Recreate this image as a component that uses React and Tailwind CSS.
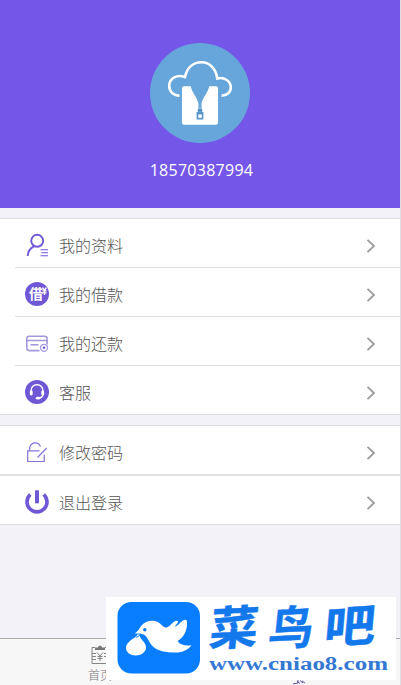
import React from "react";

const purple = "#7057d6";

function UserIcon() {
  return (
    <svg viewBox="0 0 24 24" className="size-6" fill="none" stroke={purple} strokeWidth="1.9">
      <circle cx="12.2" cy="7.8" r="6" />
      <path d="M2.7 23C3 18.3 5.2 15 9 13.3" />
      <path d="M15.5 16.7h7.5M16.5 19.7h6.5M15.5 22.7h7.5" strokeWidth="1.1" />
    </svg>
  );
}

function LoanIcon() {
  return (
    <svg viewBox="0 0 24 24" className="size-6">
      <circle cx="12" cy="12" r="12" fill={purple} />
      <text x="4" y="17" fontSize="14" fontWeight="700" fill="#fff" fontFamily="'Noto Sans CJK SC', sans-serif">借</text>
      <path d="M17.5 5.5l2 2.6 2-2.6M19.5 8v5M17.4 8.8h4.2M17.4 10.8h4.2" fill="none" stroke="#fff" strokeWidth="1.3" />
    </svg>
  );
}

function CardIcon() {
  return (
    <svg viewBox="0 0 24 24" className="size-6" fill="none" stroke="#a598df" strokeWidth="1.6">
      <path d="M14.5 19.6H4.3a2.5 2.5 0 0 1-2.5-2.5V7.5a2.3 2.3 0 0 1 2.3-2.3h15.7a2.3 2.3 0 0 1 2.3 2.3v6" />
      <path d="M1.8 10.4c0-.6.5-.9 1.2-.9h18c.7 0 1.1.3 1.1.9" strokeWidth="1.4" />
      <path d="M5.5 13.8h8" />
      <circle cx="19" cy="16.8" r="3.5" strokeWidth="1.3" />
      <circle cx="19" cy="16.8" r="1.3" fill={purple} stroke="none" />
    </svg>
  );
}

function ServiceIcon() {
  return (
    <svg viewBox="0 0 24 24" className="size-6">
      <circle cx="12" cy="12" r="12" fill={purple} />
      <path d="M6 11.5C5.8 7 8.4 4.7 12 4.7s6.2 2.3 6 6.8M18.2 14c-.6 2.6-2.2 4-4.2 4.3" fill="none" stroke="#fff" strokeWidth="1.4" />
      <rect x="4.8" y="10.4" width="2.9" height="5" rx="1.3" fill="#fff" />
      <rect x="16.3" y="10.4" width="2.9" height="5" rx="1.3" fill="#fff" />
      <ellipse cx="13" cy="18.2" rx="2.2" ry="1.4" fill="#fff" />
    </svg>
  );
}

function PasswordIcon() {
  return (
    <svg viewBox="0 0 24 24" className="size-6" fill="none" stroke="#8471d8" strokeWidth="1.2">
      <path d="M14.5 10.8H2.7v10.7h16.5v-7" />
      <path d="M4.5 10.5C4.2 5.8 6.5 2.9 10 2.9c2.9 0 4.8 1.5 5.5 3.8" />
      <path d="M12.5 17.5L21.7 8" />
    </svg>
  );
}

function PowerIcon() {
  return (
    <svg viewBox="0 0 24 24" className="size-6" fill="none" stroke={purple} strokeWidth="3.6">
      <path d="M5.3 4.5a10 10 0 1 0 13.400 0" />
      <path d="M12 .3v13" strokeWidth="4" />
    </svg>
  );
}

function Chevron() {
  return (
    <svg viewBox="0 0 10 14" className="mt-0.5 mr-6 h-3.5 w-2.5" fill="none" stroke="#9b9b9b" strokeWidth="1.8">
      <path d="M1.5 .8L8 7l-6.500 6.200" />
    </svg>
  );
}

function Row({ icon: Icon, label, className }) {
  return (
    <div className={`flex items-center pt-[3px] ${className}`}>
      <Icon />
      <span className="ml-2.5 flex-1 pt-0.5 text-base leading-6 font-light">{label}</span>
      <Chevron />
    </div>
  );
}

function Avatar() {
  return (
    <svg viewBox="0 0 100 100" className="size-[100px]">
      <circle cx="50" cy="50" r="50" fill="#67a6db" />
      <path d="M29.5 52.7C23 52.5 19 48 19.2 42.5 19.5 35 27 31 35 34 37 25 43 19.3 51.5 19.3S66 26 67.3 35.5C74 33.5 80.5 38 80.8 44c.2 5-3.8 8.7-9.3 8.7" fill="none" stroke="#fff" strokeWidth="2.6" />
      <path d="M34 43.3h6.7c1.5 7 6.8 11 7.8 18v4h3v-4c1-7 6.3-11 7.8-18H66a2 2 0 0 1 2 2v34.5a2 2 0 0 1-2 2H34a2 2 0 0 1-2-2V45.3a2 2 0 0 1 2-2z" fill="#fff" />
      <path d="M48.5 60v5M51.5 60v5" stroke="#a8cbe8" strokeWidth="1" />
      <path d="M47.8 65.5h4.4v3.5h1.2v7.5h-6.8V69h1.2z" fill="#5a96c5" />
      <path d="M48.3 71.5h3.5v3.3h-3.5z" fill="#fff" />
    </svg>
  );
}

function HomeIcon() {
  return (
    <svg viewBox="0 0 18 21" className="h-[21px] w-[18px]" fill="none" stroke="#858585" strokeWidth="1">
      <path d="M4 3.5H1v16h16v-16h-3M1 9.5h4M1 12.5h4M1 15.5h4M13 9.5h4M13 12.5h4" />
      <path d="M4 6V3.5h3C7 1 11 1 11 3.5h3V6z" fill="#777" stroke="none" />
      <path d="M6 8.5l3 3.5 3-3.5M9 12v5M6.5 12.5h5M6.5 14.5h5" />
    </svg>
  );
}

function Banner() {
  return (
    <svg viewBox="0 0 290 83" className="absolute top-[597px] left-[106px] h-[83px] w-[290px] overflow-visible">
      <rect width="290" height="83" fill="#fff" />
      <rect x="11.5" y="5" width="82.5" height="71.5" rx="14" fill="#087eff" />
      <path d="M28.7 36.5C32 34.5 33.5 31 35.5 28.5 38 25.5 42 23.7 46 23.7c4.500 0 7.500 2 10 4.800 2 1.800 3.500 2.300 5 1.700 4-1.500 5-5 8.500-6.300 2-.8 3.500.3 2.300 1.700L68.500 30C73 28.500 75 23.500 79 22.800c2-.3 2 1.500 2 3.200 0 8-3 14-9.500 18 3 4.300 8 5 14 4.300-3 4.500-9 7.300-16 7.300-10 0-18-1.500-23-6.500-3.500-3.500-4.500-8.500-8-11-3-2-6-1.500-9.800-1.600z" fill="#fff" />
      <path d="M31 37.5c1 3-11 6-11 13.500 0 4.500 4.500 7.500 9.800 7.500S40 55 40 50.500c0-6-6.500-8-6.500-13z" fill="#fff" />
      <path d="M30 40.5l4.500-2.500 3 2.500" fill="none" stroke="#087eff" strokeWidth=".9" />
      <circle cx="38.8" cy="32.8" r="1.7" fill="#087eff" />
      <g fill="#1478ed" stroke="#1478ed" strokeWidth=".5" fontFamily="'Noto Sans CJK SC', sans-serif" fontWeight="700" fontSize="46">
        <text transform="translate(102 49) rotate(-3) skewX(-9) scale(1.06 1)">菜</text>
        <text transform="translate(161 49) rotate(-3) skewX(-9) scale(.98 1)">鸟</text>
        <text transform="translate(217 47) rotate(-4) skewX(-9) scale(1.12 .96)">吧</text>
      </g>
      <text x="103" y="73" fontFamily="'Liberation Serif', serif" fontWeight="700" fontSize="18" textLength="179" lengthAdjust="spacingAndGlyphs" fill="#3478d4">www.cniao8.com</text>
    </svg>
  );
}

export default function App() {
  return (
    <div className="relative flex h-[685px] w-[401px] flex-col overflow-hidden border-r border-[#dedee2] bg-[#f3f2f8] font-['Open_Sans','Noto_Sans_CJK_SC',sans-serif] text-[#555]">
      <header className="flex h-[208px] shrink-0 flex-col items-center bg-[#7456e9] pt-[43px]">
        <Avatar />
        <p className="mt-[15px] pl-[3px] text-base leading-6 tracking-[0.27px] text-white">18570387994</p>
      </header>

      <section className="mt-2.5 shrink-0 border-y border-[#dedede] bg-white">
        <div className="ml-[15px] divide-y divide-[#dedede]">
          <Row icon={UserIcon} label="我的资料" className="h-[49px] pl-2.5" />
          <Row icon={LoanIcon} label="我的借款" className="h-[49px] pl-2.5" />
          <Row icon={CardIcon} label="我的还款" className="h-[49px] pl-2.5" />
          <Row icon={ServiceIcon} label="客服" className="h-12 pl-2.5" />
        </div>
      </section>

      <section className="mt-2.5 shrink-0 border-y border-[#dedede] bg-white">
        <Row icon={PasswordIcon} label="修改密码" className="h-[50px] border-b-2 border-[#e2e2e2] pl-[25px]" />
        <Row icon={PowerIcon} label="退出登录" className="h-12 pl-[25px]" />
      </section>

      <footer className="mt-auto flex h-[47px] shrink-0 border-t border-[#aaa] bg-[#f7f7f8]">
        <div className="flex w-[200px] flex-col items-center pt-[5px] text-xs text-[#777]">
          <HomeIcon />
          <span className="mt-[3px] leading-4 font-light">首页</span>
        </div>
        <div className="flex w-[200px] flex-col items-center pt-10">
          <svg viewBox="0 0 16 6" className="h-1.5 w-4" fill="none" stroke="#6351a8" strokeWidth="1">
            <path d="M1 5l5-1V1M5 2.5l3 2M8 1.5l3 2.5M10 2l3 2" />
          </svg>
        </div>
      </footer>

      <Banner />
    </div>
  );
}
